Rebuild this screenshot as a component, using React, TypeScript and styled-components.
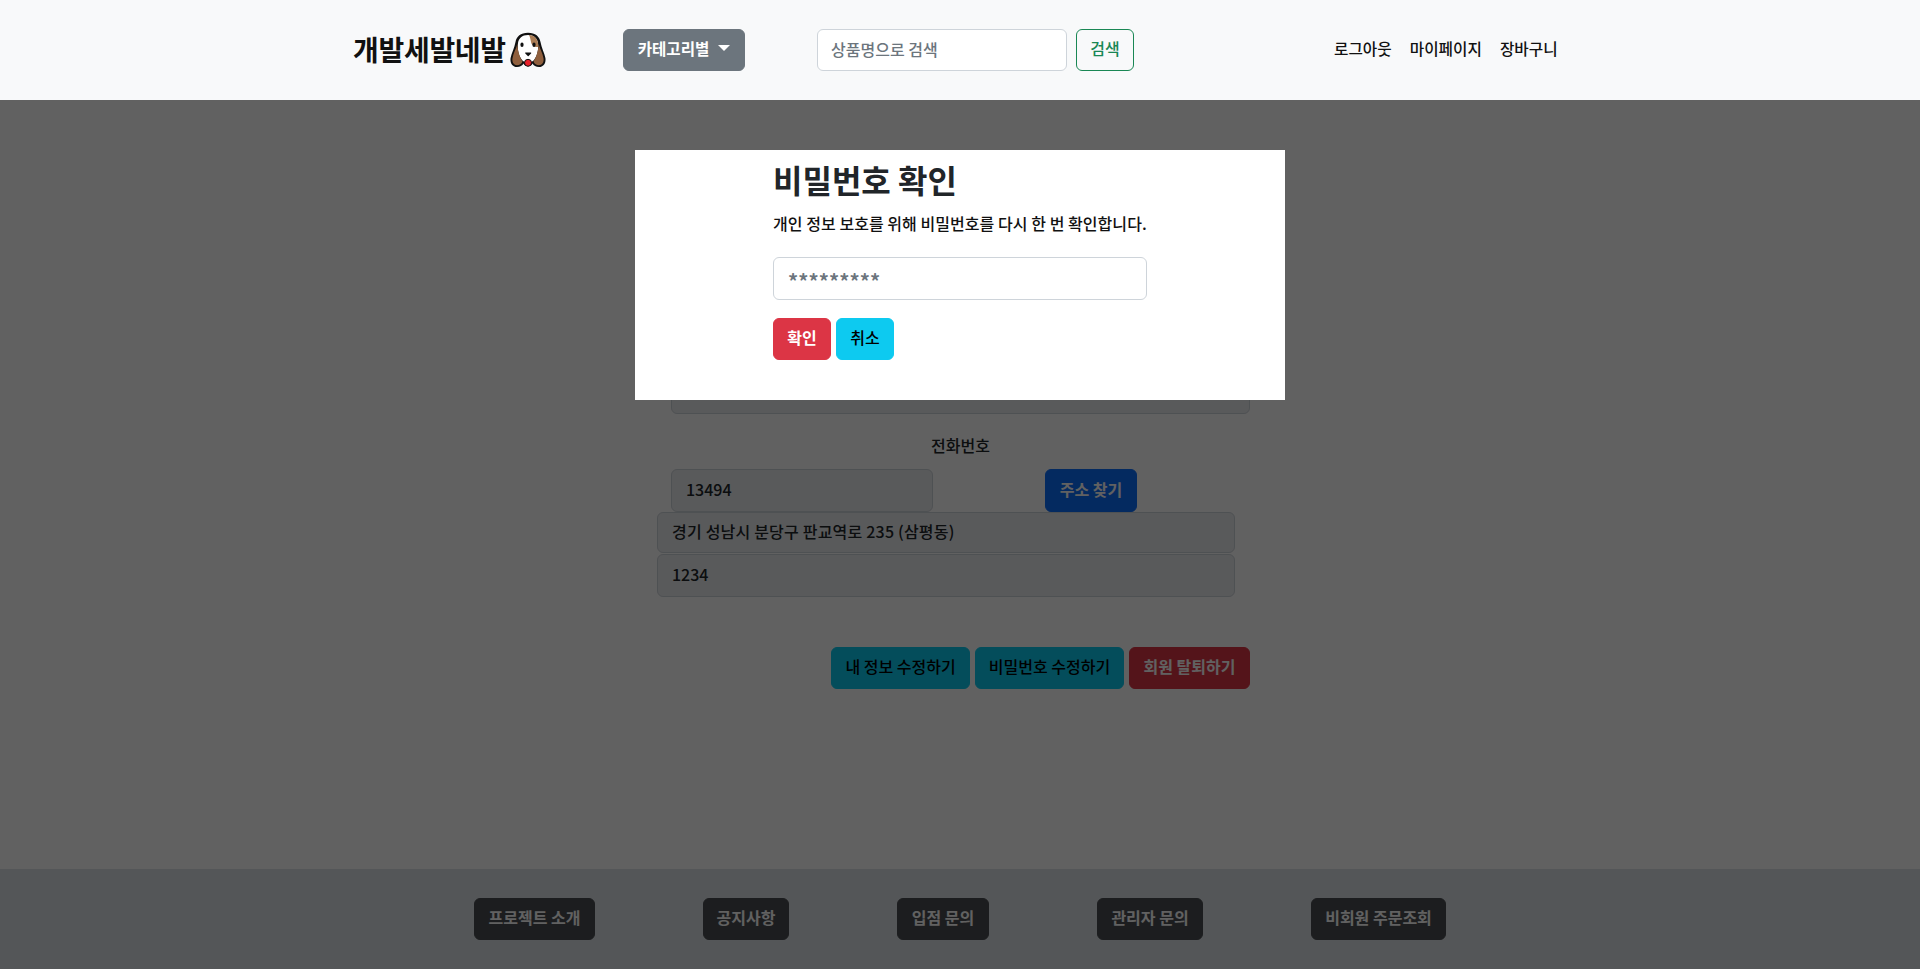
import React from "react";
import styled, { createGlobalStyle } from "styled-components";

const Global = createGlobalStyle`
  * { box-sizing: border-box; }
  html, body { margin: 0; padding: 0; height: 100%; overflow: hidden; }
  body { font-family: "Noto Sans CJK KR", "Noto Sans", sans-serif; font-size: 16px; color: #212529; background: #fff; }
`;
const Page = styled.div`
  position: relative; height: 969px; display: flex; flex-direction: column; overflow: hidden;
`;
const Nav = styled.header`
  position: relative; z-index: 3; height: 100px; background: #f8f9fa; display: flex; align-items: center; padding-left: 353px; flex: none;
`;
const Logo = styled.a`
  display: flex; align-items: center; gap: 4px; font-size: 28px; font-weight: 700; color: #111; width: 195px; letter-spacing: -0.3px; line-height: 36px;
`;
const LogoText = styled.span`
  padding-bottom: 2px;
`;
const Btn = styled.button<{ $bg: string; $fg: string; $w: number; $bold?: boolean }>`
  height: 42px; width: ${p => p.$w}px; padding: 0 0 4px; flex: none; display: inline-flex; align-items: center; justify-content: center;
  border: 1px solid ${p => p.$bg}; border-radius: 6px; background: ${p => p.$bg}; color: ${p => p.$fg};
  font: ${p => (p.$bold ? 700 : 500)} 16px "Noto Sans CJK KR", sans-serif;
`;
const Dropdown = styled(Btn)`
  margin-left: 75px; font-size: 15.6px; gap: 9px;
  &::after { content: ""; border-top: 6px solid #fff; border-left: 6px solid transparent; border-right: 6px solid transparent; margin-top: 0; }
`;
const SearchBox = styled.form`
  display: flex; gap: 9px; margin-left: 72px;
`;
const Field = styled.input<{ $w: number }>`
  width: ${p => p.$w}px; height: 43px; flex: none; padding: 0 14px 3px; border: 1px solid #ced4da; border-radius: 6px; background: #fff; color: #212529;
  font: 500 16px "Noto Sans CJK KR", sans-serif;
  &::placeholder { color: #6c757d; opacity: 1; }
  &:disabled { background: #e9ecef; opacity: 1; color: #212529; }
`;
const SearchField = styled(Field)`
  height: 42px; padding: 0 13px 2px;
`;
const SearchBtn = styled(Btn)`
  border-color: #198754; background: transparent; color: #198754;
`;
const Links = styled.nav`
  display: flex; gap: 18px; margin-left: 200px; font-size: 15.7px; font-weight: 500; color: #111; padding-bottom: 3px;
`;
const Main = styled.main`
  flex: 1; padding: 118px 0 0 671px; display: flex; flex-direction: column; width: 100%;
`;
const Form = styled.div`
  width: 579px; display: flex; flex-direction: column;
`;
const Label = styled.label`
  height: 55px; display: flex; align-items: center; justify-content: center; font-weight: 500; padding-top: 6px;
`;
const ZipRow = styled.div`
  display: flex; height: 43px; justify-content: flex-start;
`;
const ZipBtn = styled(Btn)`
  margin-left: 112px; width: 92px; height: 43px;
`;
const AddressField = styled(Field)`
  margin-left: -14px; height: 41px; margin-bottom: 1px; letter-spacing: 0.2px;
`;
const DetailField = styled(Field)`
  margin-left: -14px;
`;
const Actions = styled.div`
  display: flex; justify-content: flex-end; gap: 5px; margin-top: 50px;
`;
const Footer = styled.footer`
  height: 100px; flex: none; background: #dee2e6; display: flex; justify-content: center; gap: 108px; padding-top: 29px;
`;
const Backdrop = styled.div`
  position: absolute; left: 0; right: 0; top: 100px; bottom: 0; z-index: 2; background: rgba(0, 0, 0, 0.62);
  display: flex; justify-content: center; padding-top: 50px; align-items: flex-start;
`;
const Modal = styled.section`
  width: 650px; height: 250px; background: #fff; padding: 0 138px 0;
`;
const Title = styled.h2`
  margin: 9px 0 0; font-size: 32px; line-height: 40px; font-weight: 700; color: #212529;
`;
const Sub = styled.p`
  margin: 12px 0 0; font-size: 16px; line-height: 24px; font-weight: 500; color: #111; white-space: nowrap; letter-spacing: 0.05px;
`;
const PassField = styled(Field)`
  display: block; margin-top: 22px; font-size: 20px; font-weight: 700; padding: 3px 14px 0; letter-spacing: 0.1px;
`;
const ModalBtns = styled.div`
  display: flex; gap: 5px; margin-top: 18px;
`;

const Dog = () => (
  <svg width="36" height="36" viewBox="0 0 36 36" aria-hidden="true">
    <path d="M18 .7C10.500 .7 6.500 4.500 5.500 10 4.500 16 1.500 21 .6 26-.2 31 2.500 35 7 35c3 0 5.500-1.500 6.500-3.500 1 3.500 8 3.500 9 0 1 2 3.500 3.500 6.500 3.500 4.500 0 7.200-4 6.400-9C34.500 21 31.500 16 30.500 10 29.500 4.500 25.500 .7 18 .7Z" fill="#111" />
    <path d="M18 3C12 3 8.800 6.500 8 11c-.8 6 .7 13 4 17 2 3 10 3 12 0 3.300-4 4.800-11 4-17C27.200 6.500 24 3 18 3Z" fill="#fff" />
    <path d="M19 3.050c5 .1 8.200 3.400 9 7.950l.2 4c-3.700.6-6.700-2-7.200-5-.5-2.500-1-5-2-6.950Z" fill="#ab7d55" />
    <path d="M7.300 12C6.300 16.500 3.300 21 2.500 26.300 1.800 30.500 4 33.200 7 33.200c2.500 0 4.500-1.200 5.500-3.700C9.500 25.500 7.500 17.500 7.300 12ZM28.700 12c1 4.500 4 9 4.800 14.300.7 4.200-1.500 6.900-4.500 6.900-2.500 0-4.500-1.200-5.500-3.700 3-4 5-12 5.200-17.500Z" fill="#8f5f3d" />
    <ellipse cx="12" cy="12.700" rx="1.600" ry="2.200" fill="#111" />
    <ellipse cx="24" cy="12.700" rx="1.600" ry="2.200" fill="#111" />
    <path d="M15.300 20.500h5.400c.5 0 .7.500.4.900l-2.500 2.600c-.3.300-.5.300-.8 0l-2.500-2.600c-.3-.4-.1-.9.400-.9Z" fill="#111" />
    <circle cx="18" cy="30.800" r="3.500" fill="#e8202a" stroke="#111" strokeWidth="1" />
  </svg>
);

export default function App() {
  return (
    <Page>
      <Global />
      <Nav>
        <Logo><LogoText>개발세발네발</LogoText><Dog /></Logo>
        <Dropdown $bg="#6c757d" $fg="#fff" $w={122} $bold>카테고리별</Dropdown>
        <SearchBox>
          <SearchField $w={250} placeholder="상품명으로 검색" />
          <SearchBtn $bg="#198754" $fg="#198754" $w={58}>검색</SearchBtn>
        </SearchBox>
        <Links>
          <span>로그아웃</span>
          <span>마이페이지</span>
          <span>장바구니</span>
        </Links>
      </Nav>
      <Main>
        <Form>
          <Label>이메일</Label>
          <Field $w={579} disabled />
          <Label>이름</Label>
          <Field $w={579} disabled />
          <Label>전화번호</Label>
          <ZipRow>
            <Field $w={262} disabled defaultValue="13494" />
            <ZipBtn $bg="#0d6efd" $fg="#fff" $w={92} $bold>주소 찾기</ZipBtn>
          </ZipRow>
          <AddressField $w={578} disabled defaultValue="경기 성남시 분당구 판교역로 235 (삼평동)" />
          <DetailField $w={578} disabled defaultValue="1234" />
          <Actions>
            <Btn $bg="#0dcaf0" $fg="#000" $w={139}>내 정보 수정하기</Btn>
            <Btn $bg="#0dcaf0" $fg="#000" $w={149}>비밀번호 수정하기</Btn>
            <Btn $bg="#dc3545" $fg="#fff" $w={121} $bold>회원 탈퇴하기</Btn>
          </Actions>
        </Form>
      </Main>
      <Footer>
        <Btn $bg="#4b4e52" $fg="#fff" $w={121} $bold>프로젝트 소개</Btn>
        <Btn $bg="#4b4e52" $fg="#fff" $w={86} $bold>공지사항</Btn>
        <Btn $bg="#4b4e52" $fg="#fff" $w={92} $bold>입점 문의</Btn>
        <Btn $bg="#4b4e52" $fg="#fff" $w={106} $bold>관리자 문의</Btn>
        <Btn $bg="#4b4e52" $fg="#fff" $w={135} $bold>비회원 주문조회</Btn>
      </Footer>
      <Backdrop>
        <Modal>
          <Title>비밀번호 확인</Title>
          <Sub>개인 정보 보호를 위해 비밀번호를 다시 한 번 확인합니다.</Sub>
          <PassField $w={374} type="password" placeholder="*********" />
          <ModalBtns>
            <Btn $bg="#dc3545" $fg="#fff" $w={58} $bold>확인</Btn>
            <Btn $bg="#0dcaf0" $fg="#000" $w={58}>취소</Btn>
          </ModalBtns>
        </Modal>
      </Backdrop>
    </Page>
  );
}
